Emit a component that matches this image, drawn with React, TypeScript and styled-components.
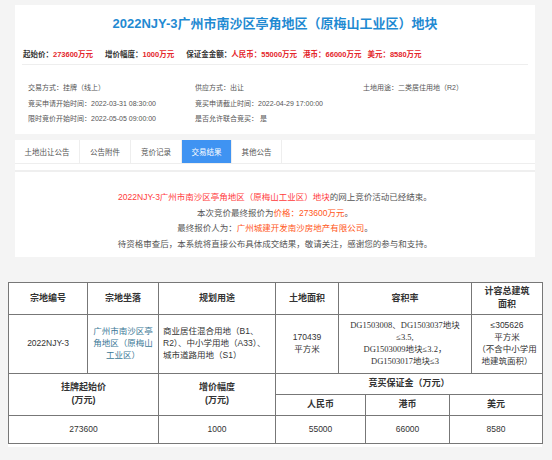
import { createGlobalStyle } from 'styled-components'
import styled from 'styled-components'

const GlobalStyle = createGlobalStyle`
  html, body {
    margin: 0;
    padding: 0;
    background: #f4f4f4;
  }
  body {
    font-family: "Liberation Sans", "Noto Sans CJK SC", sans-serif;
    color: #333;
  }
`

const Page = styled.div`
  width: 552px;
  height: 460px;
  padding-top: 5px;
  box-sizing: border-box;
  overflow: hidden;
`

const Card = styled.section`
  margin-left: 15px;
  width: 520px;
  background: #fff;
  padding: 9px 7px 8px;
  box-sizing: border-box;
`

const Title = styled.h1`
  margin: 0;
  text-align: center;
  font-size: 13px;
  line-height: 20px;
  font-weight: bold;
  color: #1f8ad2;
`

const PriceLine = styled.div`
  margin-top: 15px;
  padding: 0 1px 3px;
  border-bottom: 1px solid #eee;
  font-size: 7.5px;
  line-height: 12px;
  font-weight: bold;
  display: flex;
  gap: 12px;
  white-space: nowrap;
`

const PriceGroup = styled.span`
  display: flex;
  gap: 6px;
`

const Label = styled.span`
  color: #333;
`

const Red = styled.span`
  color: #e4262b;
`

const InfoGrid = styled.div`
  margin-top: 14px;
  padding-left: 6px;
  display: grid;
  grid-template-columns: 167px 168px 1fr;
  grid-auto-rows: 15.7px;
  align-items: center;
  font-size: 7px;
  color: #555;
  white-space: nowrap;
`

const Tabs = styled.nav`
  margin: 6px 0 0 15px;
  width: 520px;
  background: #fff;
  display: flex;
  height: 24px;
  border-bottom: 1px solid #eee;
  box-sizing: border-box;
`

const Tab = styled.div<{ $active?: boolean; $w: number }>`
  width: ${p => p.$w}px;
  display: flex;
  align-items: center;
  justify-content: center;
  font-size: 7.5px;
  color: ${p => (p.$active ? '#fff' : '#555')};
  background: ${p => (p.$active ? '#3f93f2' : '#fff')};
  border-right: 1px solid #eee;
  box-sizing: border-box;
`

const Spacer = styled.div`
  margin-left: 15px;
  width: 520px;
  height: 6px;
  background: #fff;
  border-bottom: 2px solid #efefef;
`

const Result = styled.section`
  margin-left: 15px;
  width: 520px;
  background: #fff;
  padding: 18px 0 4px;
  text-align: center;
  font-size: 8.5px;
  line-height: 15.7px;
  color: #555;
`

const Hot = styled.span<{ $tone?: 'red' | 'orange' }>`
  color: ${p => (p.$tone === 'orange' ? '#ff5722' : '#ff3b3b')};
`

const TableWrap = styled.div`
  margin: 25px 0 0 8px;
  width: 534px;
  background: #fff;
  padding-bottom: 3px;
`

const Grid = styled.table`
  width: 534px;
  border-collapse: collapse;
  table-layout: fixed;
  border: 1px solid #444;
  font-family: "Liberation Sans", "Noto Sans CJK SC", sans-serif;
  font-size: 8.5px;
  color: #333;
`

const Th = styled.th<{ $h?: number }>`
  border: 1px solid #777;
  height: ${p => p.$h ?? 20}px;
  padding: 0 4px;
  font-weight: bold;
  font-size: 9px;
  line-height: 13px;
  text-align: center;
`

const Td = styled.td<{ $align?: 'left' | 'center'; $color?: string; $serif?: boolean }>`
  border: 1px solid #777;
  padding: 0 4px;
  line-height: 11.7px;
  text-align: ${p => p.$align ?? 'center'};
  color: ${p => p.$color ?? '#333'};
  font-family: ${p =>
    p.$serif ? '"Liberation Serif", "Noto Sans CJK SC", serif' : 'inherit'};
  vertical-align: middle;
`

const Row = styled.tr<{ $h: number }>`
  height: ${p => p.$h}px;
`

const tabs = [
  { name: '土地出让公告', w: 65 },
  { name: '公告附件', w: 51 },
  { name: '竞价记录', w: 51 },
  { name: '交易结果', w: 50, active: true },
  { name: '其他公告', w: 50 }
]

const cols = [79, 71, 117, 63, 27, 84, 22, 71]

export default function App() {
  return (
    <>
      <GlobalStyle />
      <Page>
        <Card>
          <Title>2022NJY-3广州市南沙区亭角地区（原梅山工业区）地块</Title>
          <PriceLine>
            <span>
              <Label>起始价：</Label>
              <Red>273600万元</Red>
            </span>
            <span>
              <Label>增价幅度：</Label>
              <Red>1000万元</Red>
            </span>
            <PriceGroup>
              <span>
                <Label>保证金金额：</Label>
                <Red>人民币：55000万元</Red>
              </span>
              <Red>港币：66000万元</Red>
              <Red>美元：8580万元</Red>
            </PriceGroup>
          </PriceLine>
          <InfoGrid>
            <span>交易方式：挂牌（线上）</span>
            <span>供应方式：出让</span>
            <span>土地用途：二类居住用地（R2）</span>
            <span>竞买申请开始时间：2022-03-31 08:30:00</span>
            <span>竞买申请截止时间：2022-04-29 17:00:00</span>
            <span />
            <span>限时竞价开始时间：2022-05-05 09:00:00</span>
            <span>是否允许联合竞买： 是</span>
            <span />
          </InfoGrid>
        </Card>

        <Tabs>
          {tabs.map(t => (
            <Tab key={t.name} $w={t.w} $active={t.active}>
              {t.name}
            </Tab>
          ))}
        </Tabs>
        <Spacer />
        <Result>
          <div>
            <Hot>2022NJY-3广州市南沙区亭角地区（原梅山工业区）地块</Hot>的网上竞价活动已经结束。
          </div>
          <div>
            本次竞价最终报价为<Hot $tone="orange">价格：273600万元</Hot>。
          </div>
          <div>
            最终报价人为：<Hot $tone="orange">广州城建开发南沙房地产有限公司</Hot>。
          </div>
          <div>待资格审查后，本系统将直接公布具体成交结果，敬请关注，感谢您的参与和支持。</div>
        </Result>

        <TableWrap>
          <Grid>
            <colgroup>
              {cols.map((w, i) => (
                <col key={i} style={{ width: w }} />
              ))}
            </colgroup>
            <tbody>
              <Row $h={32}>
                <Th>宗地编号</Th>
                <Th>宗地坐落</Th>
                <Th>规划用途</Th>
                <Th>土地面积</Th>
                <Th colSpan={3}>容积率</Th>
                <Th>
                  计容总建筑
                  <br />
                  面积
                </Th>
              </Row>
              <Row $h={59}>
                <Td>2022NJY-3</Td>
                <Td $color="#3b7896">广州市南沙区亭角地区（原梅山工业区）</Td>
                <Td $align="left">
                  商业居住混合用地（B1、R2）、中小学用地（A33）、城市道路用地（S1）
                </Td>
                <Td>
                  170439
                  <br />
                  平方米
                </Td>
                <Td colSpan={3} $serif>
                  DG1503008、DG1503037地块
                  <br />
                  ≤3.5,
                  <br />
                  DG1503009地块≤3.2，
                  <br />
                  DG1503017地块≤3
                </Td>
                <Td>
                  ≤305626
                  <br />
                  平方米
                  <br />
                  （不含中小学用地建筑面积）
                </Td>
              </Row>
              <Row $h={20}>
                <Th colSpan={2} rowSpan={2}>
                  挂牌起始价
                  <br />
                  (万元)
                </Th>
                <Th rowSpan={2}>
                  增价幅度
                  <br />
                  (万元)
                </Th>
                <Th colSpan={5}>竞买保证金（万元）</Th>
              </Row>
              <Row $h={21}>
                <Th colSpan={2}>人民币</Th>
                <Th>港币</Th>
                <Th colSpan={2}>美元</Th>
              </Row>
              <Row $h={28}>
                <Td colSpan={2}>273600</Td>
                <Td>1000</Td>
                <Td colSpan={2}>55000</Td>
                <Td>66000</Td>
                <Td colSpan={2}>8580</Td>
              </Row>
            </tbody>
          </Grid>
        </TableWrap>
      </Page>
    </>
  )
}
